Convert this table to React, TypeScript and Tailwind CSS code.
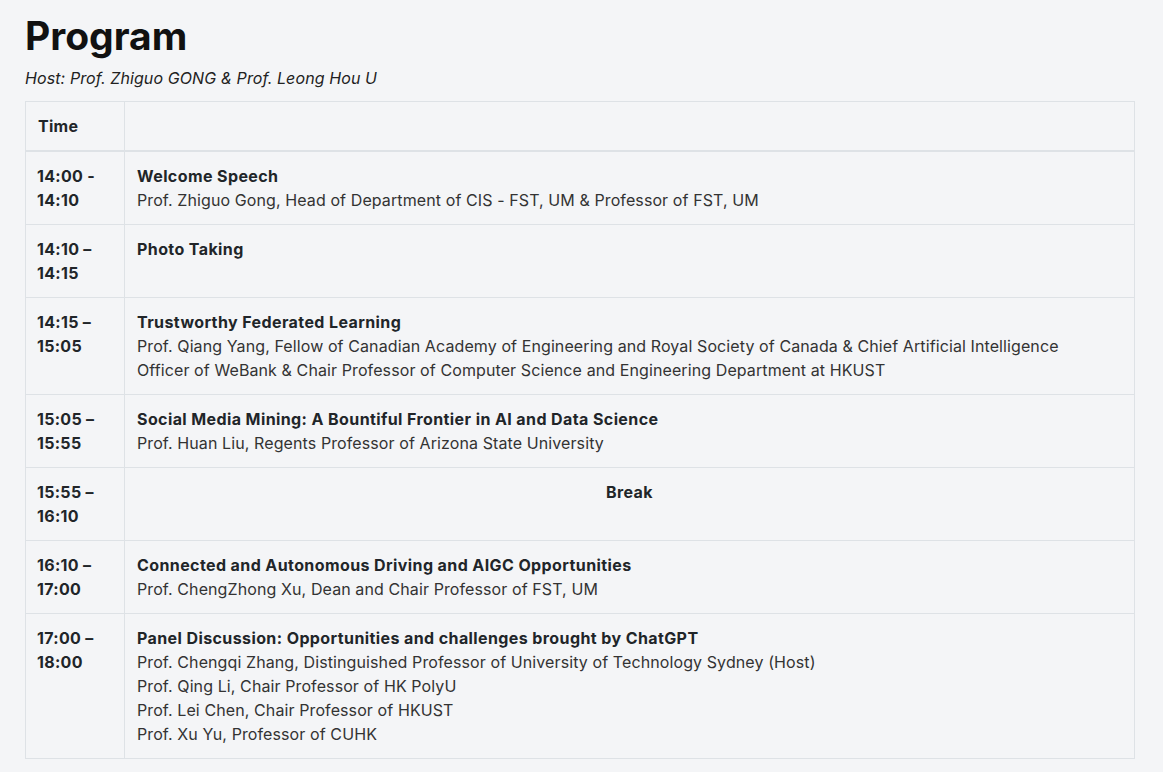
type Row = {
  time: [string, string];
  title: string;
  lines?: string[];
  center?: boolean;
};

const rows: Row[] = [
  {
    time: ['14:00 -', '14:10'],
    title: 'Welcome Speech',
    lines: ['Prof. Zhiguo Gong, Head of Department of CIS - FST, UM & Professor of FST, UM'],
  },
  { time: ['14:10 –', '14:15'], title: 'Photo Taking' },
  {
    time: ['14:15 –', '15:05'],
    title: 'Trustworthy Federated Learning',
    lines: [
      'Prof. Qiang Yang, Fellow of Canadian Academy of Engineering and Royal Society of Canada & Chief Artificial Intelligence Officer of WeBank & Chair Professor of Computer Science and Engineering Department at HKUST',
    ],
  },
  {
    time: ['15:05 –', '15:55'],
    title: 'Social Media Mining: A Bountiful Frontier in AI and Data Science',
    lines: ['Prof. Huan Liu, Regents Professor of Arizona State University'],
  },
  { time: ['15:55 –', '16:10'], title: 'Break', center: true },
  {
    time: ['16:10 –', '17:00'],
    title: 'Connected and Autonomous Driving and AIGC Opportunities',
    lines: ['Prof. ChengZhong Xu, Dean and Chair Professor of FST, UM'],
  },
  {
    time: ['17:00 –', '18:00'],
    title: 'Panel Discussion: Opportunities and challenges brought by ChatGPT',
    lines: [
      'Prof. Chengqi Zhang, Distinguished Professor of University of Technology Sydney (Host)',
      'Prof. Qing Li, Chair Professor of HK PolyU',
      'Prof. Lei Chen, Chair Professor of HKUST',
      'Prof. Xu Yu, Professor of CUHK',
    ],
  },
];

export default function App() {
  return (
    <div className="min-h-screen bg-[#f4f5f7] pl-[25px] pt-[12px] font-['Inter',sans-serif] text-[#333]">
      <h1 className="text-[39px] font-bold leading-[47px] text-[#111]">Program</h1>
      <p className="mt-[7px] text-base italic leading-6 tracking-[0.1px] text-[#222]">
        Host: Prof. Zhiguo GONG &amp; Prof. Leong Hou U
      </p>

      <table className="mt-[11px] w-[1110px] border-collapse text-base leading-6">
        <thead>
          <tr>
            <th className="w-[99px] border border-b-2 border-[#dee2e6] px-3 py-3 text-left font-bold tracking-[0.3px] text-[#212529]">
              Time
            </th>
            <th className="border border-b-2 border-[#dee2e6] px-3 py-3"></th>
          </tr>
        </thead>
        <tbody>
          {rows.map((r) => (
            <tr key={r.time[0]}>
              <td className="border border-[#dee2e6] py-3 pl-[11px] pr-3 align-top font-bold tracking-[0.3px] text-[#212529]">
                {r.time[0]}
                <br />
                {r.time[1]}
              </td>
              <td className="border border-[#dee2e6] px-3 py-3 align-top">
                <p className={`font-bold tracking-[0.4px] text-[#212529] ${r.center ? 'text-center' : ''}`}>{r.title}</p>
                {r.lines?.map((l) => (
                  <p key={l} className="max-w-[960px] tracking-[0.1px]">
                    {l}
                  </p>
                ))}
              </td>
            </tr>
          ))}
        </tbody>
      </table>
    </div>
  );
}
